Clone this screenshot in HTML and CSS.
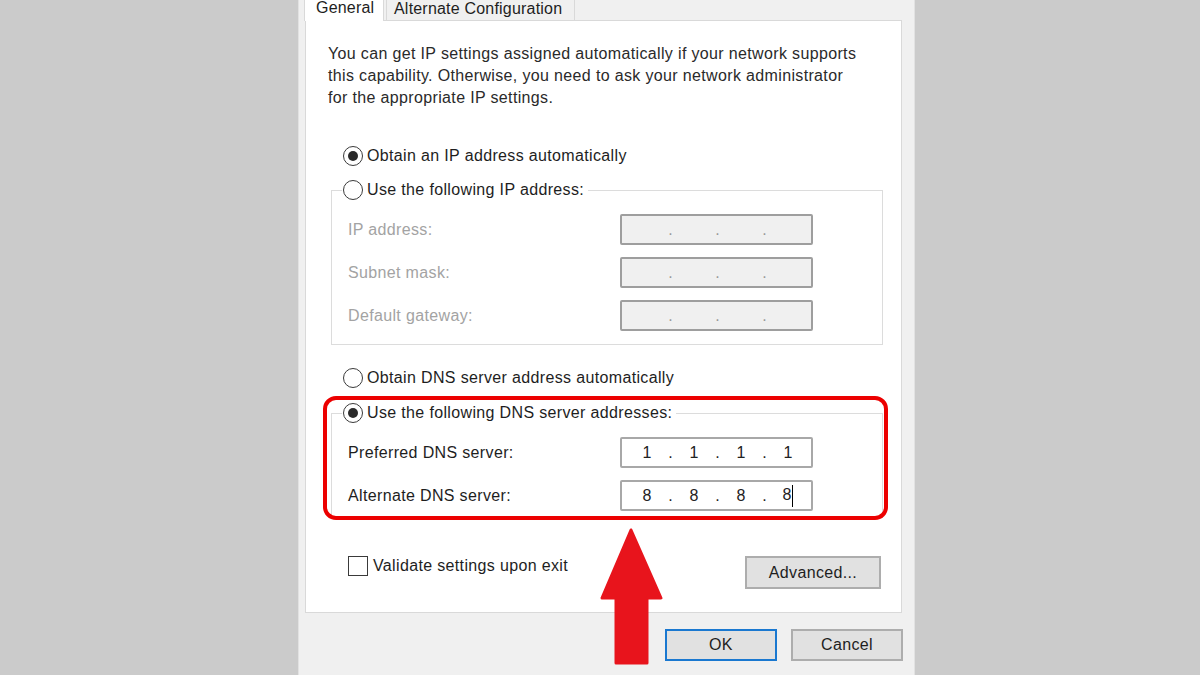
FILE: index.html
```html
<!DOCTYPE html>
<html lang="en">
<head>
  <meta charset="UTF-8" />
  <title>Internet Protocol Version 4 (TCP/IPv4) Properties</title>
  <link rel="stylesheet" href="styles.css">
</head>
<body>
  <div class="dialog">
    <div class="tabs">
      <div class="tab active">General</div>
      <div class="tab">Alternate Configuration</div>
    </div>

    <div class="panel">
      <p class="intro">You can get IP settings assigned automatically if your network supports<br>this capability. Otherwise, you need to ask your network administrator<br>for the appropriate IP settings.</p>

      <label class="radio first"><span class="dot checked"></span>Obtain an IP address automatically</label>

      <fieldset class="group">
        <legend><label class="radio"><span class="dot"></span>Use the following IP address:</label></legend>
        <div class="rows disabled">
          <span>IP address:</span>
          <div class="ipbox"><span class="oct"></span><span class="sep">.</span><span class="oct"></span><span class="sep">.</span><span class="oct"></span><span class="sep">.</span><span class="oct"></span></div>
          <span>Subnet mask:</span>
          <div class="ipbox"><span class="oct"></span><span class="sep">.</span><span class="oct"></span><span class="sep">.</span><span class="oct"></span><span class="sep">.</span><span class="oct"></span></div>
          <span>Default gateway:</span>
          <div class="ipbox"><span class="oct"></span><span class="sep">.</span><span class="oct"></span><span class="sep">.</span><span class="oct"></span><span class="sep">.</span><span class="oct"></span></div>
        </div>
      </fieldset>

      <label class="radio dns-auto"><span class="dot"></span>Obtain DNS server address automatically</label>

      <fieldset class="group dns">
        <legend><label class="radio"><span class="dot checked"></span>Use the following DNS server addresses:</label></legend>
        <div class="rows">
          <span>Preferred DNS server:</span>
          <div class="ipbox"><span class="oct">1</span><span class="sep">.</span><span class="oct">1</span><span class="sep">.</span><span class="oct">1</span><span class="sep">.</span><span class="oct">1</span></div>
          <span>Alternate DNS server:</span>
          <div class="ipbox"><span class="oct">8</span><span class="sep">.</span><span class="oct">8</span><span class="sep">.</span><span class="oct">8</span><span class="sep">.</span><span class="oct caret">8</span></div>
        </div>
      </fieldset>

      <div class="bottom-row">
        <label class="check"><span class="box"></span>Validate settings upon exit</label>
        <button class="btn advanced">Advanced...</button>
      </div>

      <div class="highlight"></div>
    </div>

    <div class="actions">
      <button class="btn default">OK</button>
      <button class="btn">Cancel</button>
    </div>
  </div>

  <svg class="arrow" viewBox="0 0 68 140" width="68" height="140">
    <polygon points="33,4 63,72 49,72 49,137 18,137 18,72 4,72" fill="#e8141c" stroke="#e8141c" stroke-width="3" stroke-linejoin="round"/>
  </svg>
</body>
</html>
```

FILE: styles.css
```css
body {
  margin: 0;
  height: 675px;
  overflow: hidden;
  background: #cbcbcb;
  font-family: 'Liberation Sans', Arial, sans-serif;
  font-size: 16px;
  letter-spacing: 0.35px;
  color: #1e1e1e;
}

.dialog {
  box-sizing: border-box;
  width: 617px;
  height: 700px;
  margin: -6px 0 0 298px;
  padding: 0 11px 0 6px;
  background: #f0f0f0;
  border-left: 1px solid #e2e2e2;
  border-right: 1px solid #e2e2e2;
}

/* Tabs */
.tabs {
  display: flex;
  align-items: flex-end;
  height: 26px;
}

.tab {
  box-sizing: border-box;
  height: 24px;
  line-height: 24px;
  padding: 0 7px;
  margin-left: 2px;
  background: #f0f0f0;
  border: 1px solid #d9d9d9;
  border-bottom: none;
  width: 189px;
  letter-spacing: 0.2px;
}

.tab.active {
  position: relative;
  height: 27px;
  line-height: 26px;
  width: 80px;
  margin: 0 0 -1px -1px;
  padding-left: 11px;
  background: #fff;
  z-index: 1;
}

/* Panel */
.panel {
  position: relative;
  box-sizing: border-box;
  width: 597px;
  height: 593px;
  padding: 22px 18px 0 22px;
  background: #fff;
  border: 1px solid #d9d9d9;
}

.intro {
  margin: 0;
  line-height: 22px;
  white-space: nowrap;
  color: #2a2a2a;
}

.radio {
  display: flex;
  align-items: center;
  gap: 4px;
  height: 22px;
  white-space: nowrap;
}

.radio.first {
  margin: 36px 0 0 15px;
}

.radio.dns-auto {
  margin: 22px 0 0 15px;
}

.dot {
  box-sizing: border-box;
  width: 20px;
  height: 20px;
  border: 1.5px solid #3a3a3a;
  border-radius: 50%;
  background: #fff;
  display: flex;
  align-items: center;
  justify-content: center;
}

.dot.checked::after {
  content: "";
  width: 10px;
  height: 10px;
  border-radius: 50%;
  background: #2a2a2a;
}

/* Group boxes */
.group {
  margin: 12px 0 0 3px;
  padding: 0 0 13px 16px;
  border: 1px solid #dcdcdc;
}

.group.dns {
  margin-top: 13px;
  padding-bottom: 6px;
}

.group legend {
  margin-left: -6px;
  padding: 0 4px 0 1px;
}

.rows {
  display: grid;
  grid-template-columns: 272px 193px;
  grid-auto-rows: 31px;
  row-gap: 12px;
  align-items: center;
  margin-top: 13px;
  white-space: nowrap;
}

.rows.disabled {
  color: #a3a3a3;
}

.ipbox {
  box-sizing: border-box;
  height: 31px;
  display: flex;
  align-items: center;
  padding-left: 13px;
  border: 2px solid #a8a8a8;
  border-radius: 2px;
  background: #fff;
  color: #222;
  letter-spacing: 0;
}

.rows.disabled .ipbox {
  background: #f0f0f0;
  border-color: #9e9e9e;
  color: #9a9a9a;
}

.oct {
  width: 24px;
  text-align: center;
}

.sep {
  width: 23px;
  text-align: center;
}

.caret::after {
  content: "";
  display: inline-block;
  width: 1px;
  height: 22px;
  margin-left: 1px;
  vertical-align: middle;
  background: #000;
}

/* Bottom of panel */
.bottom-row {
  display: flex;
  justify-content: space-between;
  align-items: flex-start;
  margin: 38px 2px 0 20px;
}

.check {
  display: flex;
  align-items: center;
  gap: 5px;
  height: 20px;
}

.box {
  box-sizing: border-box;
  width: 20px;
  height: 20px;
  border: 1.5px solid #3a3a3a;
  background: #fff;
}

.btn {
  box-sizing: border-box;
  width: 136px;
  height: 33px;
  font-family: inherit;
  font-size: 16px;
  letter-spacing: 0.35px;
  color: #1e1e1e;
  background: #e1e1e1;
  border: 2px solid #adadad;
  padding: 0;
}

.actions {
  display: flex;
  justify-content: flex-end;
  gap: 14px;
  margin-top: 16px;
}

.actions .btn {
  width: 112px;
  height: 32px;
}

.btn.default {
  border-color: #1a78d0;
}

/* Red call-outs over the screenshot */
.highlight {
  position: absolute;
  left: 17px;
  top: 375px;
  box-sizing: border-box;
  width: 565px;
  height: 124px;
  border: 4px solid #ec0000;
  border-radius: 13px;
}

.arrow {
  position: absolute;
  left: 598px;
  top: 526px;
}
```
